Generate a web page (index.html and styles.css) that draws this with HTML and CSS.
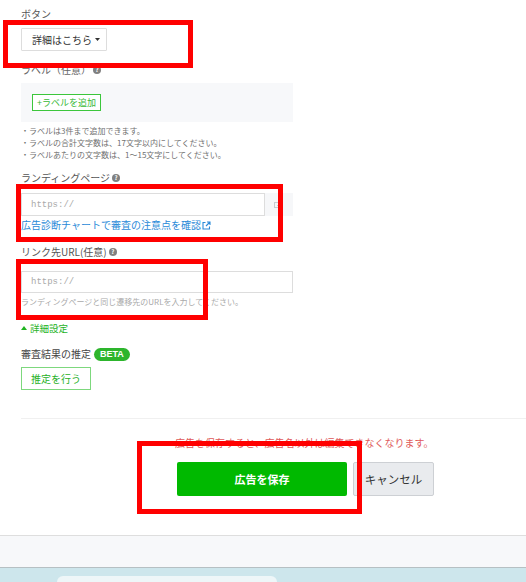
FILE: index.html
```html
<!DOCTYPE html>
<html lang="ja">
<head>
<meta charset="utf-8">
<title>広告作成</title>
<link rel="stylesheet" href="styles.css">
</head>
<body>
<div class="page">
  <div class="form">
    <div class="label first">ボタン</div>
    <button class="btn-select">詳細はこちら<svg class="caret" width="5" height="3" viewBox="0 0 5 3"><path d="M0 0H5L2.5 3Z" fill="#333"/></svg></button>

    <div class="label l-label">ラベル（任意）<span class="help">?</span></div>
    <div class="label-box">
      <button class="btn-add">+ラベルを追加</button>
    </div>
    <ul class="notes">
      <li>ラベルは3件まで追加できます。</li>
      <li>ラベルの合計文字数は、17文字以内にしてください。</li>
      <li>ラベルあたりの文字数は、1〜15文字にしてください。</li>
    </ul>

    <div class="label l-lp">ランディングページ<span class="help">?</span></div>
    <div class="input-group">
      <div class="input grow">https://</div>
      <div class="addon"><svg width="7" height="6" viewBox="0 0 7 6"><rect x="0.5" y="0.5" width="6" height="5" fill="none" stroke="#c8ccd0"/><path d="M3 3.5h2.5" stroke="#c8ccd0"/></svg></div>
    </div>
    <a class="link">広告診断チャートで審査の注意点を確認<svg class="ext" width="9" height="9" viewBox="0 0 9 9"><path d="M3.5 1.5H1V8H7.5V5.5" fill="none" stroke="#2a8ad8" stroke-width="1.1"/><path d="M5 1H8V4M8 1L4 5" fill="none" stroke="#2a8ad8" stroke-width="1.1"/></svg></a>

    <div class="label l-url">リンク先URL(任意)<span class="help">?</span></div>
    <div class="input full">https://</div>
    <div class="hint">ランディングページと同じ遷移先のURLを入力してください。</div>

    <div class="advanced"><svg class="tri" width="6" height="4" viewBox="0 0 6 4"><path d="M0 4H6L3 0Z" fill="#1fb31f"/></svg>詳細設定</div>

    <div class="label l-est">審査結果の推定<span class="beta">BETA</span></div>
    <button class="btn-est">推定を行う</button>
  </div>

  <div class="sep"></div>

  <div class="footer">
    <div class="warn">広告を保存すると、広告名以外は編集できなくなります。</div>
    <div class="actions">
      <button class="btn-save">広告を保存</button>
      <button class="btn-cancel">キャンセル</button>
    </div>
  </div>

  <div class="bar"></div>
  <div class="strip"><div class="tab"></div></div>

  <div class="mark m1"></div>
  <div class="mark m2"></div>
  <div class="mark m3"></div>
  <div class="mark m4"></div>
</div>
</body>
</html>
```

FILE: styles.css
```css
* { box-sizing: border-box; }
html, body { margin: 0; padding: 0; background: #fff; }
body {
  font-family: "Noto Sans CJK JP", "Noto Sans", sans-serif;
  color: #555;
  width: 526px;
  height: 582px;
  overflow: hidden;
}
.page { position: relative; width: 526px; height: 582px; }
.form { padding-left: 21px; width: 293px; display: flex; flex-direction: column; align-items: flex-start; }
.label { font-size: 10px; line-height: 14px; color: #555; display: flex; align-items: center; white-space: nowrap; }
.first { margin-top: 7px; }
.help {
  display: inline-flex; align-items: center; justify-content: center;
  width: 8px; height: 8px; border-radius: 50%;
  background: #808080; color: #fff; font-size: 6px; font-weight: bold;
  margin-left: 2px; line-height: 1;
}
button { font-family: inherit; cursor: pointer; }
.btn-select {
  margin-top: 7px; height: 23px; width: 86px; padding: 0 0 0 10px;
  background: #fff; border: 1px solid #ddd; border-radius: 1px;
  font-size: 10px; color: #333; display: flex; align-items: center; gap: 2px;
}
.caret { margin-left: 1px; }
.l-label { margin-top: 12px; color: #666; }
.label-box { margin-top: 6px; width: 272px; height: 39px; background: #f7f8fa; padding: 11px 11px; }
.btn-add {
  height: 17px; padding: 0 4px; background: #fff; border: 1px solid #3cc63c;
  color: #37b837; font-size: 9px; display: flex; align-items: center; line-height: 1;
}
.notes { list-style: none; margin: 3px 0 0 0; padding: 0; font-size: 8px; line-height: 12px; color: #707070; }
.notes li::before { content: "・"; }
.l-lp { margin-top: 10px; }
.input-group { margin-top: 8px; display: flex; width: 272px; height: 23px; }
.input {
  height: 23px; border: 1px solid #ddd; background: #fff;
  font-family: "Liberation Mono", monospace; font-size: 9px; color: #aaa;
  display: flex; align-items: center; padding-left: 9px;
}
.grow { flex: 1; }
.addon { width: 28px; background: #f6f7f9; display: flex; align-items: center; justify-content: center; padding-right: 4px; }
.link { margin-top: 2px; font-size: 10px; line-height: 14px; color: #2a8ad8; display: flex; align-items: center; white-space: nowrap; }
.ext { margin-left: 1px; }
.l-url { margin-top: 13px; }
.full { margin-top: 12px; width: 272px; height: 22px; }
.hint { margin-top: 3px; font-size: 8px; line-height: 12px; color: #aaa; white-space: nowrap; }
.advanced { margin-top: 13px; font-size: 9.5px; line-height: 14px; color: #1fb31f; display: flex; align-items: center; gap: 3px; }
.l-est { margin-top: 12px; color: #444; }
.beta {
  margin-left: 3px; background: #2db52d; color: #fff; font-family: "Liberation Sans", Arial, sans-serif;
  font-weight: bold; font-size: 9px; line-height: 13px; padding: 0 6px; border-radius: 7px;
}
.btn-est {
  margin-top: 6px; height: 23px; width: 70px; padding: 0;
  background: #fff; border: 1.5px solid #7dd87d; color: #27b027; font-size: 10px;
}
.sep { margin: 28px 0 0 21px; height: 1px; background: #f0f0f0; }
.footer { padding-left: 175px; display: flex; flex-direction: column; align-items: flex-start; }
.warn { margin-top: 17px; font-size: 10px; line-height: 14px; color: #e05a5a; white-space: nowrap; }
.actions { margin: 12px 0 0 2px; display: flex; gap: 6px; }
.btn-save {
  width: 170px; height: 34px; background: #00b900; border: none; border-radius: 2px;
  color: #fff; font-weight: bold; font-size: 11px;
}
.btn-cancel {
  width: 81px; height: 34px; background: #e9ebee; border: 1px solid #cdd0d4; border-radius: 2px;
  color: #333; font-size: 11.5px;
}
.bar { margin-top: 39px; height: 33px; background: #f7f8fa; border-top: 1px solid #dedede; border-bottom: 1px solid #b6c0c3; }
.strip { height: 14px; background: #cde6ec; padding: 8px 0 0 57px; }
.tab { width: 220px; height: 6px; background: #eef6f8; border-radius: 6px 6px 0 0; }
.mark { position: absolute; border: 5px solid #ff0000; }
.m1 { left: 3px; top: 20px; width: 190px; height: 48px; }
.m2 { left: 16px; top: 184px; width: 267px; height: 58px; }
.m3 { left: 16px; top: 259px; width: 192px; height: 61px; }
.m4 { left: 137px; top: 441px; width: 225px; height: 73px; }
```
